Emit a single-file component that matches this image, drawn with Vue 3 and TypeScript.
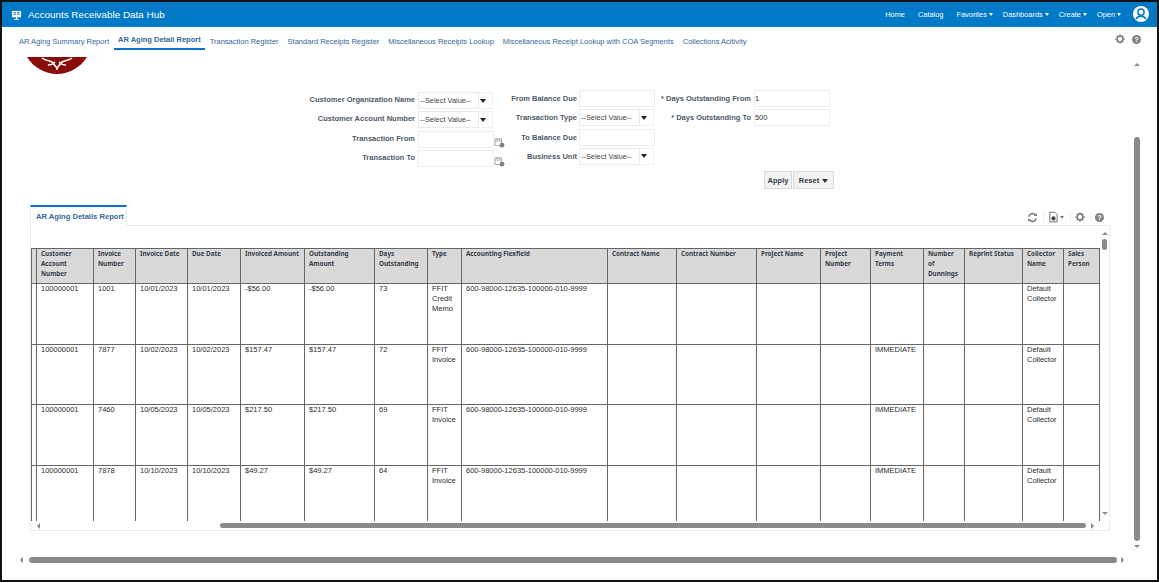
<script setup lang="ts">
const navItems = [
  { label: 'Home', caret: false },
  { label: 'Catalog', caret: false },
  { label: 'Favorites', caret: true },
  { label: 'Dashboards', caret: true },
  { label: 'Create', caret: true },
  { label: 'Open', caret: true },
]
const tabs = [
  'AR Aging Summary Report',
  'AR Aging Detail Report',
  'Transaction Register',
  'Standard Receipts Register',
  'Miscellaneous Receipts Lookup',
  'Miscellaneous Receipt Lookup with COA Segments',
  'Collections Acitivity',
]
const columns = [
  { name: '', width: 5 },
  { name: 'Customer Account Number', width: 57 },
  { name: 'Invoice Number', width: 42 },
  { name: 'Invoice Date', width: 52 },
  { name: 'Due Date', width: 53 },
  { name: 'Invoiced Amount', width: 64 },
  { name: 'Outstanding Amount', width: 70 },
  { name: 'Days Outstanding', width: 53 },
  { name: 'Type', width: 34 },
  { name: 'Accounting Flexfield', width: 146 },
  { name: 'Contract Name', width: 69 },
  { name: 'Contract Number', width: 80 },
  { name: 'Project Name', width: 64 },
  { name: 'Project Number', width: 50 },
  { name: 'Payment Terms', width: 53 },
  { name: 'Number of Dunnings', width: 41 },
  { name: 'Reprint Status', width: 58 },
  { name: 'Collector Name', width: 41 },
  { name: 'Sales Person', width: 36 },
]
const flex = '600-98000-12635-100000-010-9999'
const rows = [
  { h: 61, cells: ['', '100000001', '1001', '10/01/2023', '10/01/2023', '-$56.00', '-$56.00', '73', 'FFIT Credit Memo', flex, '', '', '', '', '', '', '', 'Default Collector', ''] },
  { h: 60, cells: ['', '100000001', '7877', '10/02/2023', '10/02/2023', '$157.47', '$157.47', '72', 'FFIT Invoice', flex, '', '', '', '', 'IMMEDIATE', '', '', 'Default Collector', ''] },
  { h: 61, cells: ['', '100000001', '7460', '10/05/2023', '10/05/2023', '$217.50', '$217.50', '69', 'FFIT Invoice', flex, '', '', '', '', 'IMMEDIATE', '', '', 'Default Collector', ''] },
  { h: 60, cells: ['', '100000001', '7878', '10/10/2023', '10/10/2023', '$49.27', '$49.27', '64', 'FFIT Invoice', flex, '', '', '', '', 'IMMEDIATE', '', '', 'Default Collector', ''] },
]
</script>

<template>
  <div class="frame">
    <header class="topbar">
      <svg class="hub-icon" viewBox="0 0 12 12" width="11" height="11">
        <path d="M1 1h10v7H1z" fill="#fff" />
        <path d="M2.500 2.500h3v1h-3zM6.500 2.500h3v1h-3zM2.500 4.500h3v1h-3zM6.500 4.500h3v1h-3z" fill="#0079c6" />
        <path d="M5.300 8h1.400v2h2v1H3.300v-1h2z" fill="#fff" />
      </svg>
      <span class="hub-title">Accounts Receivable Data Hub</span>
      <nav class="nav">
        <span v-for="n in navItems" :key="n.label" class="nav-item" :class="{ 'has-caret': n.caret }">
          {{ n.label }}<i v-if="n.caret" class="nav-caret"></i>
        </span>
      </nav>
      <svg class="avatar" viewBox="0 0 16 16" width="16" height="16">
        <circle cx="8" cy="8" r="8" fill="#fff" />
        <circle cx="8" cy="6.200" r="3.100" fill="none" stroke="#0079c6" stroke-width="1.500" />
        <path d="M2.800 13.200c1.200-2.200 3-3 5.200-3s4 .8 5.200 3" fill="none" stroke="#0079c6" stroke-width="1.500" />
      </svg>
    </header>

    <div class="tabbar">
      <span v-for="(t, i) in tabs" :key="t" class="tab" :class="{ active: i === 1 }">{{ t }}</span>
      <span class="tabbar-icons">
        <svg class="gear" viewBox="0 0 12 12" width="10" height="10">
          <circle cx="6" cy="6" r="3.500" fill="none" stroke="#777" stroke-width="1.800" />
          <path d="M6 .3v2M6 9.700v2M.3 6h2M9.700 6h2M2 2l1.400 1.400M8.600 8.600 10 10M10 2 8.600 3.400M3.400 8.600 2 10" stroke="#777" stroke-width="1.500" />
        </svg>
        <span class="help">?</span>
      </span>
    </div>

    <div class="page">
      <main class="content">
        <svg class="logo" viewBox="0 0 60 17" width="60" height="17">
          <path d="M0 0h60C54 10 42 17 30 17S6 10 0 0z" fill="#8b0b0b" />
          <path d="M15 1c3 3 7 2 10 4 2 2 3 4 5 6 2-2 3-4 5-6 3-2 7-1 10-4M21 8c3 0 5-1 7-3M39 8c-3 0-5-1-7-3M30 11v2" fill="none" stroke="#fff" stroke-width="1.600" />
        </svg>

        <section class="form">
          <div class="form-col col-one">
            <label>Customer Organization Name</label>
            <div class="select"><span class="select-box">--Select Value--</span><i class="select-arrow"></i></div>
            <label>Customer Account Number</label>
            <div class="select"><span class="select-box">--Select Value--</span><i class="select-arrow"></i></div>
            <label>Transaction From</label>
            <div class="date"><span class="input"></span><svg class="cal" viewBox="0 0 11 11" width="11" height="11"><path d="M1 2h6.500v6.500H1zM1 4h6.500M2.800 1v2M5.800 1v2" fill="none" stroke="#9a9a9a" stroke-width=".8" /><circle cx="8" cy="8.200" r="2.400" fill="#808080" /></svg></div>
            <label>Transaction To</label>
            <div class="date"><span class="input"></span><svg class="cal" viewBox="0 0 11 11" width="11" height="11"><path d="M1 2h6.500v6.500H1zM1 4h6.500M2.800 1v2M5.800 1v2" fill="none" stroke="#9a9a9a" stroke-width=".8" /><circle cx="8" cy="8.200" r="2.400" fill="#808080" /></svg></div>
          </div>
          <div class="form-col col-two">
            <label>From Balance Due</label>
            <span class="input"></span>
            <label>Transaction Type</label>
            <div class="select"><span class="select-box">--Select Value--</span><i class="select-arrow"></i></div>
            <label>To Balance Due</label>
            <span class="input"></span>
            <label>Business Unit</label>
            <div class="select"><span class="select-box">--Select Value--</span><i class="select-arrow"></i></div>
          </div>
          <div class="form-col col-three">
            <label>* Days Outstanding From</label>
            <span class="input">1</span>
            <label>* Days Outstanding To</label>
            <span class="input">500</span>
          </div>
        </section>

        <div class="actions">
          <button class="btn apply">Apply</button>
          <button class="btn reset">Reset <i class="reset-arrow"></i></button>
        </div>

        <div class="panel-head">
          <span class="panel-tab">AR Aging Details Report</span>
          <span class="toolbar">
            <svg viewBox="0 0 12 12" width="11" height="11" class="tool-refresh">
              <path d="M2 5a4 4 0 0 1 7-1.800M10 7a4 4 0 0 1-7 1.800" fill="none" stroke="#777" stroke-width="1.600" />
              <path d="M7.500 4.300h3.300V1zM4.500 7.700H1.200V11z" fill="#777" />
            </svg>
            <i class="tool-sep"></i>
            <svg viewBox="0 0 12 12" width="11" height="12" class="tool-export">
              <path d="M2 .8h5.500L10 3.300v8H2z" fill="#fff" stroke="#666" />
              <circle cx="6" cy="7.500" r="2.300" fill="#444" />
            </svg>
            <i class="tool-caret"></i>
            <i class="tool-sep"></i>
            <svg viewBox="0 0 12 12" width="10" height="10" class="tool-gear">
              <circle cx="6" cy="6" r="3.500" fill="none" stroke="#777" stroke-width="1.800" />
              <path d="M6 .3v2M6 9.700v2M.3 6h2M9.700 6h2M2 2l1.400 1.400M8.600 8.600 10 10M10 2 8.600 3.400M3.400 8.600 2 10" stroke="#777" stroke-width="1.500" />
            </svg>
            <i class="tool-sep"></i>
            <span class="help">?</span>
          </span>
        </div>

        <section class="panel">
          <div class="panel-main">
            <div class="panel-left">
              <div class="panel-strip"></div>
              <div class="table-wrap">
                <table class="grid">
                  <colgroup>
                    <col v-for="c in columns" :key="c.name" :style="{ width: c.width + 'px' }" />
                  </colgroup>
                  <thead>
                    <tr>
                      <th v-for="c in columns" :key="c.name">{{ c.name }}</th>
                    </tr>
                  </thead>
                  <tbody>
                    <tr v-for="(r, ri) in rows" :key="ri" :style="{ height: r.h + 'px' }">
                      <td v-for="(v, ci) in r.cells" :key="ci">{{ v }}</td>
                    </tr>
                  </tbody>
                </table>
              </div>
            </div>
            <div class="vbar inner-v">
              <i class="arr up"></i>
              <i class="inner-v-thumb"></i>
              <i class="arr down bottom"></i>
            </div>
          </div>
          <div class="hbar inner-h">
            <i class="arr left"></i>
            <i class="inner-h-thumb"></i>
            <i class="arr right"></i>
          </div>
        </section>
      </main>
      <div class="vbar outer-v">
        <i class="arr up"></i>
        <i class="outer-v-thumb"></i>
        <i class="arr down"></i>
      </div>
    </div>

    <div class="hbar outer-h">
      <i class="arr left"></i>
      <i class="outer-h-thumb"></i>
      <i class="arr right"></i>
    </div>
  </div>
</template>

<style>
html, body { margin: 0; background: #fff; }
</style>

<style scoped>
.frame {
  width: 1159px;
  height: 582px;
  box-sizing: border-box;
  border: 2px solid #111;
  background: #fff;
  display: flex;
  flex-direction: column;
  overflow: hidden;
  font-family: "Liberation Sans", Arial, sans-serif;
}
.topbar {
  height: 25px;
  flex: none;
  background: #0079c6;
  color: #fff;
  display: flex;
  align-items: center;
  box-sizing: border-box;
  padding: 0 8px 1px 9px;
}
.hub-icon { margin-top: 2px; }
.hub-title { font-size: 9.900px; margin-left: 6px; }
.nav { margin-left: auto; display: flex; gap: 13px; font-size: 7.400px; }
.nav-item { display: flex; align-items: center; }
.nav-item.has-caret { margin-right: -3px; }
.nav-caret {
  width: 0; height: 0; margin: 1px 0 0 2px;
  border-left: 2.500px solid transparent;
  border-right: 2.500px solid transparent;
  border-top: 3px solid #fff;
}
.avatar { margin-left: 15px; margin-top: 0; }
.tabbar {
  height: 23px;
  flex: none;
  display: flex;
  align-items: flex-start;
  padding: 10px 0 0 17px;
  box-sizing: border-box;
  gap: 9px;
}
.tab { font-size: 7.500px; color: #33689c; white-space: nowrap; line-height: 10px; }
.tab.active {
  font-weight: bold;
  padding: 0 4.500px;
  margin: -2px -4.500px 0;
  height: 15px;
  box-sizing: border-box;
  border-bottom: 2px solid #0572ce;
  line-height: 9px;
}
.tabbar-icons { margin-left: auto; margin-right: 16px; margin-top: -3px; display: flex; gap: 7px; align-items: center; }
.help {
  display: inline-block;
  width: 9px; height: 9px; border-radius: 50%;
  background: #808080; color: #fff;
  font-size: 7.400px; font-weight: bold; line-height: 9px; text-align: center;
}
.page { height: 503px; flex: none; display: flex; }
.content { width: 1128px; flex: none; padding: 7px 0 0 28px; box-sizing: border-box; overflow: hidden; }
.logo { display: block; margin-left: -3px; }
.form { display: flex; margin: 16px 0 0 268px; height: 75px; }
.form-col { display: grid; align-content: start; row-gap: 2.300px; grid-auto-rows: 17px; font-size: 7.500px; }
.form-col label {
  color: #4f5a66; font-weight: bold; text-align: right;
  line-height: 17px; white-space: nowrap;
}
.col-one { grid-template-columns: 117px 87px; column-gap: 3px; padding-top: 2px; width: 207px; }
.col-one label { line-height: 15px; }
.col-two { grid-template-columns: 69px 76px; column-gap: 2px; margin-left: 3px; width: 147px; }
.col-three { grid-template-columns: 90px 76px; column-gap: 3px; margin-left: 6px; }
.input {
  display: block; height: 17px; box-sizing: border-box;
  border: 1px solid #e9eef2; background: #fff;
  font-size: 7.400px; line-height: 15px; padding-left: 0; color: #333;
}
.select {
  width: 75px; height: 17px; box-sizing: border-box;
  border: 1px solid #eef2f5; display: flex; align-items: center;
}
.select-box {
  width: 61px; height: 17px; margin: -1px 0 -1px -1px; box-sizing: border-box; flex: none;
  border: 1px solid #e6ebef;
  font-size: 7.400px; line-height: 16px; color: #444; padding-left: 1px; white-space: nowrap; overflow: hidden;
}
.select-arrow {
  width: 0; height: 0; margin-left: 1px;
  border-left: 3px solid transparent; border-right: 3px solid transparent; border-top: 4px solid #222;
}
.date { display: flex; align-items: flex-end; }
.date .input { width: 76px; flex: none; }
.cal { flex: none; }
.actions { width: 804px; margin-top: 6px; display: flex; justify-content: flex-end; gap: 1px; }
.btn {
  height: 18px; padding: 0; box-sizing: border-box;
  border: 1px solid #d8dbde; background: #f2f2f2; color: #33404d;
  font: bold 7.500px "Liberation Sans", Arial, sans-serif;
}
.apply { width: 28px; }
.reset { width: 41px; }
.reset-arrow {
  display: inline-block; width: 0; height: 0; margin-left: 1px; vertical-align: 0;
  border-left: 3px solid transparent; border-right: 3px solid transparent; border-top: 4px solid #333;
}
.panel-head { width: 1080px; height: 20px; margin-top: 16px; display: flex; }
.panel-tab {
  box-sizing: border-box; width: 97px; height: 21px; margin-bottom: -1px;
  border-top: 2px solid #0572ce;
  border-left: 1px solid #e6ecf0; border-right: 1px solid #e6ecf0;
  background: #fff; color: #33689c; font-size: 7.600px; font-weight: bold; white-space: nowrap;
  line-height: 19px; padding-left: 5px; position: relative; z-index: 1;
}
.toolbar { margin-left: auto; display: flex; align-items: center; margin-right: 6px; height: 24px; }
.tool-sep { width: 1px; height: 10px; background: #eceff2; margin: 0 4px 0 5px; }
.tool-export { margin-left: 0; }
.tool-caret {
  width: 0; height: 0; margin: 0 1px 0 1px;
  border-left: 2.500px solid transparent; border-right: 2.500px solid transparent; border-top: 3px solid #777;
}
.panel {
  width: 1080px; height: 306px; box-sizing: border-box;
  border: 1px solid #e6ecf0;
  display: flex; flex-direction: column;
}
.panel-main { display: flex; height: 295px; }
.panel-left { width: 1069px; flex: none; }
.panel-strip { height: 22px; }
.table-wrap { height: 273px; overflow: hidden; }
.grid { border-collapse: collapse; table-layout: fixed; width: 1068px; }
.grid th {
  height: 35px; box-sizing: border-box;
  background: #d9d9d9; border: 1px solid #666;
  vertical-align: top; text-align: left; padding: 0 4px;
  font: bold 6.300px/10px "Noto Sans", "Liberation Sans", sans-serif; color: #333d4a;
  overflow: hidden;
}
.grid td {
  border-left: 1px solid #666; border-right: 1px solid #666; border-bottom: 1px solid #666;
  vertical-align: top; padding: 0 4px;
  font-size: 7.500px; line-height: 10px; color: #2c2c2c; overflow: hidden;
}
.vbar { display: flex; flex-direction: column; align-items: center; }
.hbar { display: flex; align-items: center; }
.arr { width: 0; height: 0; flex: none; display: block; }
.arr.up { border-left: 3px solid transparent; border-right: 3px solid transparent; border-bottom: 3px solid #8a8a8a; }
.arr.down { border-left: 3px solid transparent; border-right: 3px solid transparent; border-top: 3px solid #8a8a8a; }
.arr.left { border-top: 3px solid transparent; border-bottom: 3px solid transparent; border-right: 3px solid #8a8a8a; }
.arr.right { border-top: 3px solid transparent; border-bottom: 3px solid transparent; border-left: 3px solid #8a8a8a; }
.inner-v { width: 9px; height: 295px; padding-top: 6px; box-sizing: border-box; }
.inner-v-thumb { width: 5px; height: 11px; margin-top: 4px; border-radius: 3px; background: #8a8a8a; }
.inner-v .bottom { margin-top: 262px; }
.inner-h { height: 9px; padding-left: 6px; }
.inner-h-thumb { width: 866px; height: 5px; margin-left: 180px; border-radius: 3px; background: #8a8a8a; }
.inner-h .right { margin-left: 5px; }
.outer-v { width: 11px; height: 503px; margin-left: 1px; padding-top: 13px; box-sizing: border-box; }
.outer-v-thumb { width: 6px; height: 404px; margin-top: 71px; border-radius: 3px; background: #8a8a8a; }
.outer-v .down { margin-top: 4px; }
.outer-h { height: 14px; padding-left: 18px; flex: none; }
.outer-h-thumb { width: 1088px; height: 6px; margin-left: 6px; border-radius: 3px; background: #8a8a8a; }
.outer-h .right { margin-left: 4px; }
</style>
